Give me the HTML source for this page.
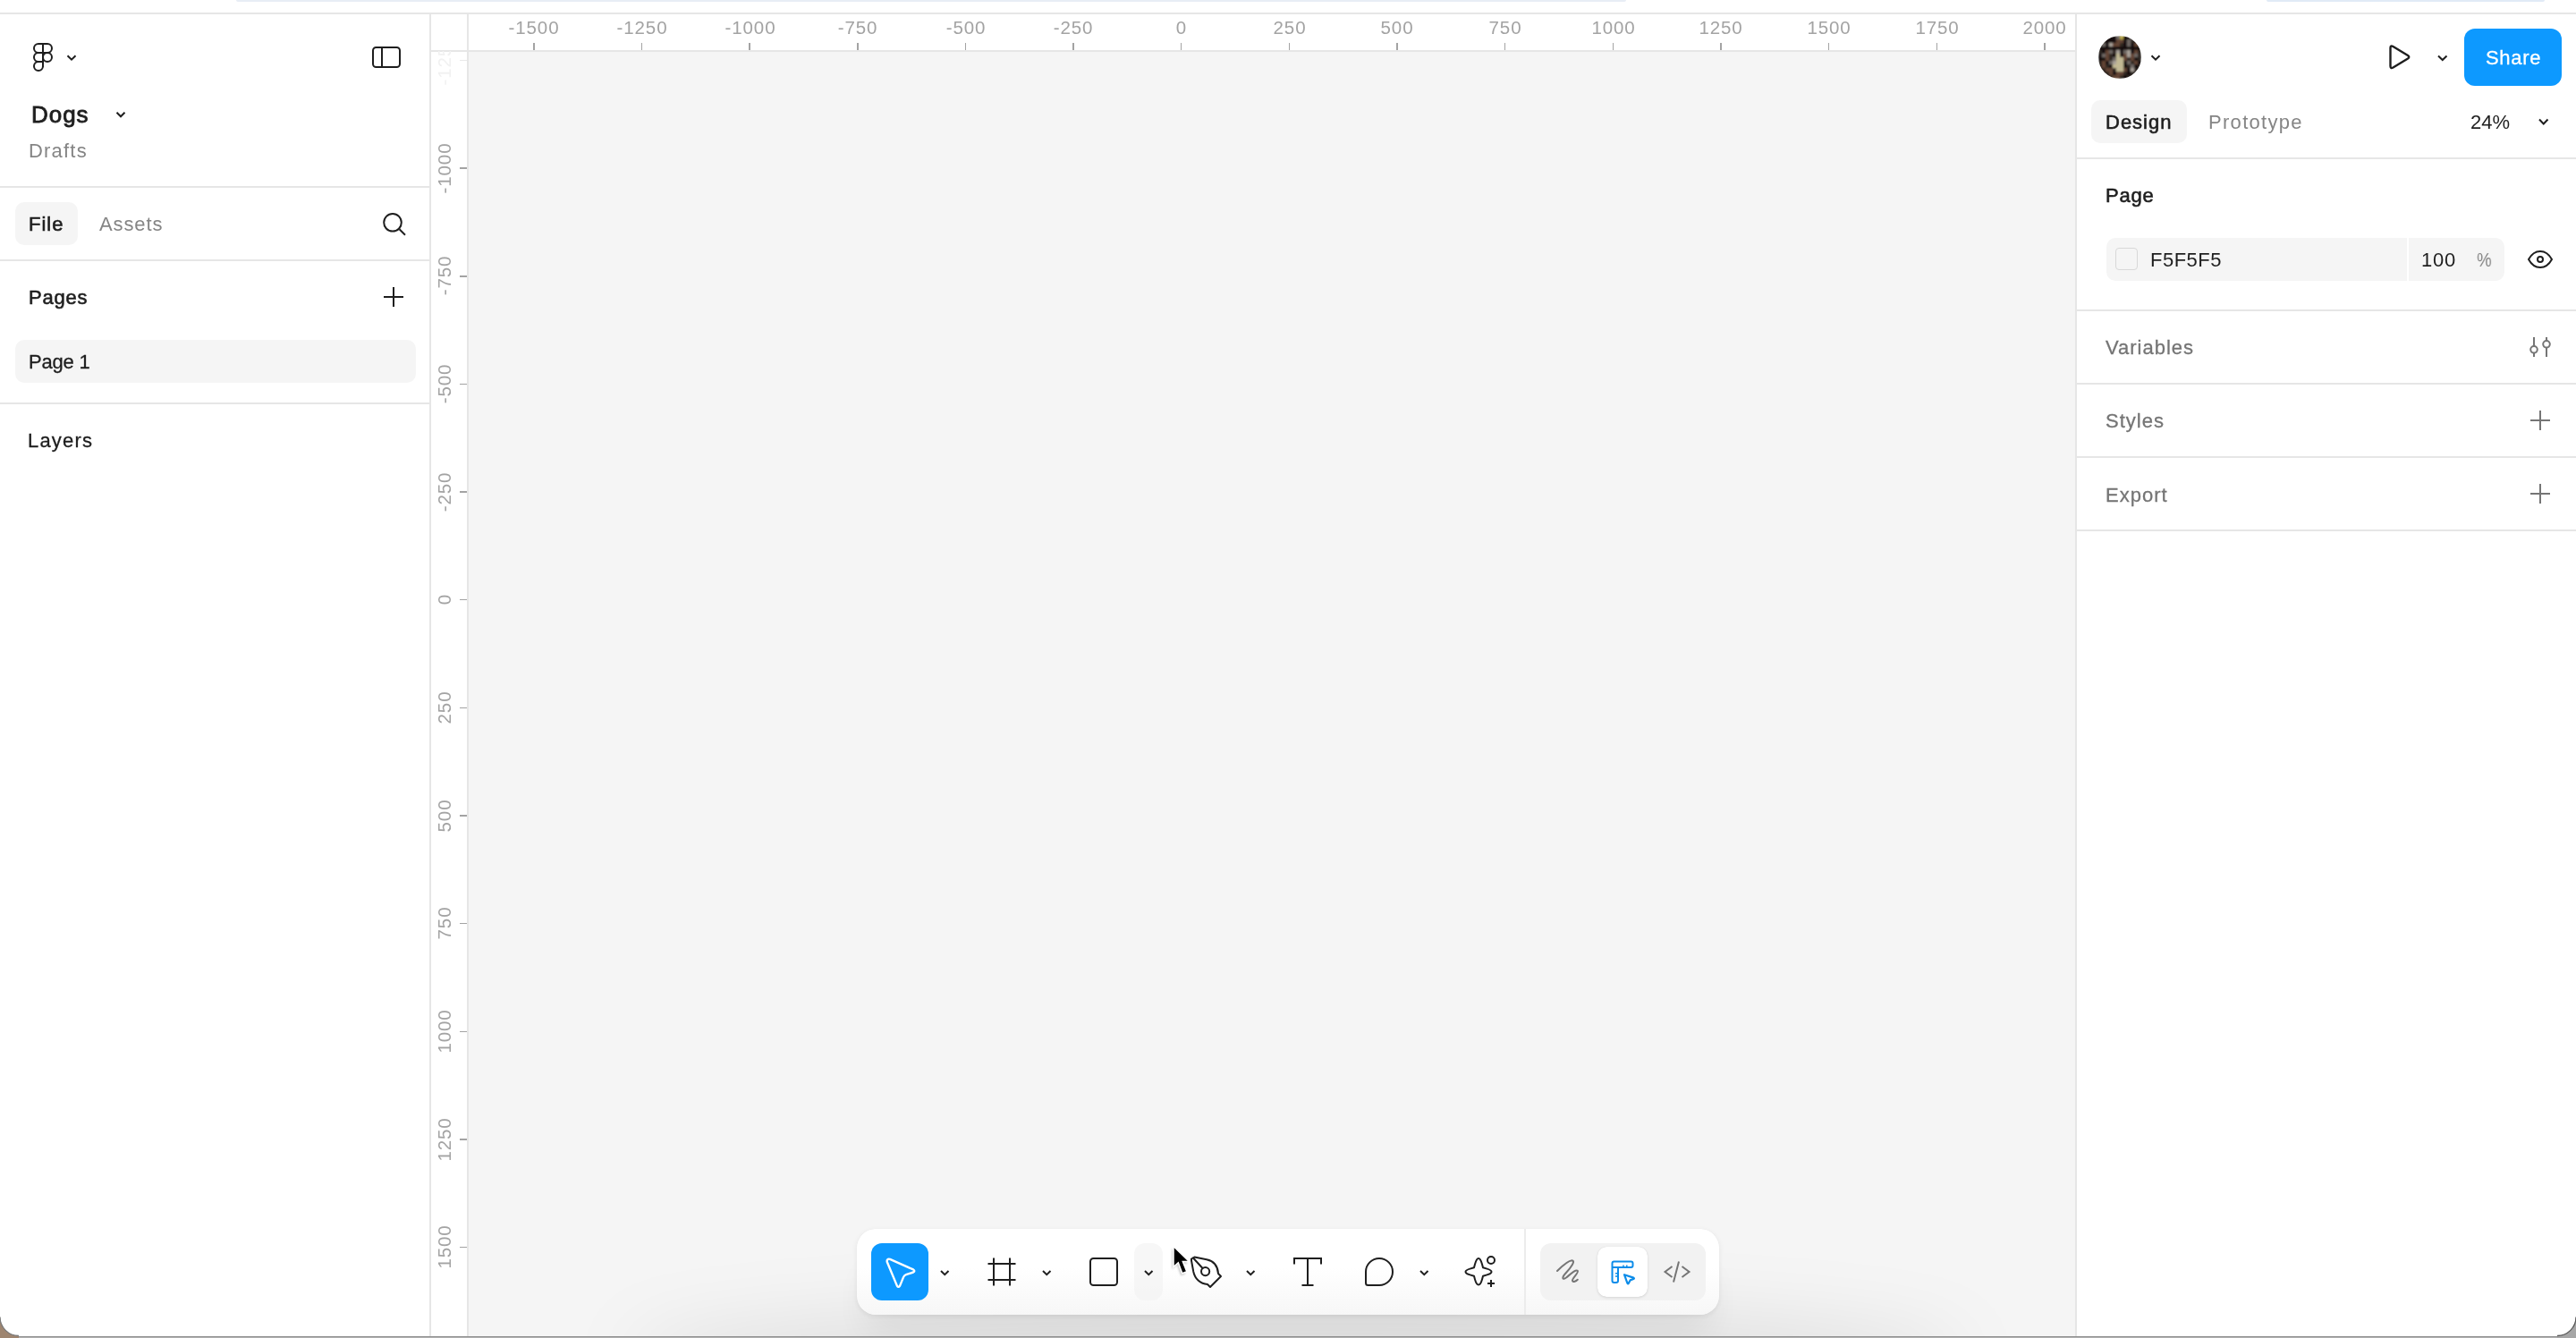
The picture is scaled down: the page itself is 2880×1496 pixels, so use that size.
<!DOCTYPE html>
<html><head><meta charset="utf-8">
<style>
html,body{margin:0;padding:0;}
body{width:2880px;height:1496px;position:relative;overflow:hidden;background:#fff;font-family:"Liberation Sans",sans-serif;color:#1e1e1e;}
.a{position:absolute;}
.t{position:absolute;white-space:nowrap;line-height:1;will-change:transform;-webkit-font-smoothing:antialiased;}
.hl{position:absolute;height:2px;background:#e6e6e6;}
.vl{position:absolute;width:2px;background:#e6e6e6;}
svg{position:absolute;overflow:visible;}
</style></head><body>
<div class="a" style="left:264px;top:0;width:1554px;height:2px;background:#e8edf5;border-radius:0 0 4px 4px"></div>
<div class="a" style="left:2534px;top:0;width:311px;height:2px;background:#e1eaf6;border-radius:0 0 4px 4px"></div>
<div class="hl" style="left:0;top:14px;width:2880px;"></div>
<div class="a" style="left:523px;top:57px;width:1797px;height:1439px;background:#f5f5f5"></div>
<div class="vl" style="left:480px;top:15px;height:1481px;"></div>
<div class="hl" style="left:0;top:208px;width:480px;"></div>
<div class="hl" style="left:0;top:290px;width:480px;"></div>
<div class="hl" style="left:0;top:450px;width:480px;"></div>
<div class="vl" style="left:522px;top:15px;height:1481px;"></div>
<div class="hl" style="left:481px;top:56px;width:1840px;"></div>
<div class="vl" style="left:2320px;top:15px;height:1481px;"></div>
<div class="hl" style="left:2321px;top:176px;width:559px;"></div>
<div class="hl" style="left:2321px;top:346px;width:559px;"></div>
<div class="hl" style="left:2321px;top:428px;width:559px;"></div>
<div class="hl" style="left:2321px;top:510px;width:559px;"></div>
<div class="hl" style="left:2321px;top:592px;width:559px;"></div>
<div class="t" style="left:35.3px;top:114.5px;font-size:26px;font-weight:400;color:#1e1e1e;letter-spacing:0.95px;-webkit-text-stroke:0.85px #1e1e1e;">Dogs</div>
<div class="t" style="left:32.0px;top:158.1px;font-size:22px;font-weight:400;color:#858585;letter-spacing:1.2px;">Drafts</div>
<div class="a" style="left:17px;top:226px;width:70px;height:48px;background:#f5f5f5;border-radius:10px"></div>
<div class="t" style="left:32.0px;top:240.1px;font-size:22px;font-weight:400;color:#1e1e1e;letter-spacing:1.0px;-webkit-text-stroke:0.6px #1e1e1e;">File</div>
<div class="t" style="left:111.0px;top:240.1px;font-size:22px;font-weight:400;color:#858585;letter-spacing:0.9px;">Assets</div>
<div class="t" style="left:31.5px;top:322.1px;font-size:22px;font-weight:400;color:#1e1e1e;letter-spacing:0.8px;-webkit-text-stroke:0.6px #1e1e1e;">Pages</div>
<div class="a" style="left:17px;top:380px;width:448px;height:48px;background:#f5f5f5;border-radius:10px"></div>
<div class="t" style="left:32.0px;top:394.1px;font-size:22px;font-weight:400;color:#1e1e1e;letter-spacing:-0.2px;-webkit-text-stroke:0.3px #1e1e1e;">Page 1</div>
<div class="t" style="left:31.0px;top:482.1px;font-size:22px;font-weight:400;color:#1e1e1e;letter-spacing:1.2px;-webkit-text-stroke:0.3px #1e1e1e;">Layers</div>
<div class="a" style="left:2755px;top:32px;width:109px;height:64px;background:#0d99ff;border-radius:12px"></div>
<div class="t" style="left:2778.5px;top:53.6px;font-size:22px;font-weight:400;color:#fff;letter-spacing:0.7px;-webkit-text-stroke:0.3px #fff;">Share</div>
<div class="a" style="left:2338px;top:112px;width:107px;height:48px;background:#f5f5f5;border-radius:10px"></div>
<div class="t" style="left:2354.0px;top:126.1px;font-size:22px;font-weight:400;color:#1e1e1e;letter-spacing:1.0px;-webkit-text-stroke:0.6px #1e1e1e;">Design</div>
<div class="t" style="left:2469.0px;top:126.1px;font-size:22px;font-weight:400;color:#858585;letter-spacing:1.3px;">Prototype</div>
<div class="t" style="left:2762.0px;top:126.1px;font-size:22px;font-weight:400;color:#1e1e1e;letter-spacing:0px;">24%</div>
<div class="t" style="left:2354.0px;top:207.6px;font-size:22px;font-weight:400;color:#1e1e1e;letter-spacing:0.8px;-webkit-text-stroke:0.6px #1e1e1e;">Page</div>
<div class="a" style="left:2355px;top:266px;width:445px;height:48px;background:#f5f5f5;border-radius:10px"></div>
<div class="a" style="left:2691px;top:266px;width:2px;height:48px;background:#fff"></div>
<div class="a" style="left:2365px;top:277px;width:23px;height:23px;background:#f5f5f5;border:1.5px solid #d8d8d8;border-radius:4px"></div>
<div class="t" style="left:2404.0px;top:279.7px;font-size:22px;font-weight:400;color:#1e1e1e;letter-spacing:0.5px;">F5F5F5</div>
<div class="t" style="left:2707.0px;top:279.7px;font-size:22px;font-weight:400;color:#1e1e1e;letter-spacing:0.8px;">100</div>
<div class="t" style="left:2768.5px;top:279.7px;font-size:22px;font-weight:400;color:#858585;letter-spacing:0px;transform:scaleX(0.85);transform-origin:0 0;">%</div>
<div class="t" style="left:2354.0px;top:377.8px;font-size:22px;font-weight:400;color:#757575;letter-spacing:1.0px;-webkit-text-stroke:0.3px #757575;">Variables</div>
<div class="t" style="left:2354.0px;top:460.4px;font-size:22px;font-weight:400;color:#757575;letter-spacing:1.0px;-webkit-text-stroke:0.3px #757575;">Styles</div>
<div class="t" style="left:2354.0px;top:542.5px;font-size:22px;font-weight:400;color:#757575;letter-spacing:1.0px;-webkit-text-stroke:0.3px #757575;">Export</div>
<div class="a" style="left:595.94px;top:48px;width:1.6px;height:8px;background:#a3a3a3"></div>
<div class="t" style="left:537.19px;width:120px;text-align:center;top:21.1px;font-size:20.5px;letter-spacing:0.9px;color:#a3a3a3">-1500</div>
<div class="a" style="left:716.60px;top:48px;width:1.6px;height:8px;background:#a3a3a3"></div>
<div class="t" style="left:657.85px;width:120px;text-align:center;top:21.1px;font-size:20.5px;letter-spacing:0.9px;color:#a3a3a3">-1250</div>
<div class="a" style="left:837.26px;top:48px;width:1.6px;height:8px;background:#a3a3a3"></div>
<div class="t" style="left:778.51px;width:120px;text-align:center;top:21.1px;font-size:20.5px;letter-spacing:0.9px;color:#a3a3a3">-1000</div>
<div class="a" style="left:957.92px;top:48px;width:1.6px;height:8px;background:#a3a3a3"></div>
<div class="t" style="left:899.17px;width:120px;text-align:center;top:21.1px;font-size:20.5px;letter-spacing:0.9px;color:#a3a3a3">-750</div>
<div class="a" style="left:1078.58px;top:48px;width:1.6px;height:8px;background:#a3a3a3"></div>
<div class="t" style="left:1019.83px;width:120px;text-align:center;top:21.1px;font-size:20.5px;letter-spacing:0.9px;color:#a3a3a3">-500</div>
<div class="a" style="left:1199.24px;top:48px;width:1.6px;height:8px;background:#a3a3a3"></div>
<div class="t" style="left:1140.49px;width:120px;text-align:center;top:21.1px;font-size:20.5px;letter-spacing:0.9px;color:#a3a3a3">-250</div>
<div class="a" style="left:1319.90px;top:48px;width:1.6px;height:8px;background:#a3a3a3"></div>
<div class="t" style="left:1261.15px;width:120px;text-align:center;top:21.1px;font-size:20.5px;letter-spacing:0.9px;color:#a3a3a3">0</div>
<div class="a" style="left:1440.56px;top:48px;width:1.6px;height:8px;background:#a3a3a3"></div>
<div class="t" style="left:1381.81px;width:120px;text-align:center;top:21.1px;font-size:20.5px;letter-spacing:0.9px;color:#a3a3a3">250</div>
<div class="a" style="left:1561.22px;top:48px;width:1.6px;height:8px;background:#a3a3a3"></div>
<div class="t" style="left:1502.47px;width:120px;text-align:center;top:21.1px;font-size:20.5px;letter-spacing:0.9px;color:#a3a3a3">500</div>
<div class="a" style="left:1681.88px;top:48px;width:1.6px;height:8px;background:#a3a3a3"></div>
<div class="t" style="left:1623.13px;width:120px;text-align:center;top:21.1px;font-size:20.5px;letter-spacing:0.9px;color:#a3a3a3">750</div>
<div class="a" style="left:1802.54px;top:48px;width:1.6px;height:8px;background:#a3a3a3"></div>
<div class="t" style="left:1743.79px;width:120px;text-align:center;top:21.1px;font-size:20.5px;letter-spacing:0.9px;color:#a3a3a3">1000</div>
<div class="a" style="left:1923.20px;top:48px;width:1.6px;height:8px;background:#a3a3a3"></div>
<div class="t" style="left:1864.45px;width:120px;text-align:center;top:21.1px;font-size:20.5px;letter-spacing:0.9px;color:#a3a3a3">1250</div>
<div class="a" style="left:2043.86px;top:48px;width:1.6px;height:8px;background:#a3a3a3"></div>
<div class="t" style="left:1985.11px;width:120px;text-align:center;top:21.1px;font-size:20.5px;letter-spacing:0.9px;color:#a3a3a3">1500</div>
<div class="a" style="left:2164.52px;top:48px;width:1.6px;height:8px;background:#a3a3a3"></div>
<div class="t" style="left:2105.77px;width:120px;text-align:center;top:21.1px;font-size:20.5px;letter-spacing:0.9px;color:#a3a3a3">1750</div>
<div class="a" style="left:2285.18px;top:48px;width:1.6px;height:8px;background:#a3a3a3"></div>
<div class="t" style="left:2226.43px;width:120px;text-align:center;top:21.1px;font-size:20.5px;letter-spacing:0.9px;color:#a3a3a3">2000</div>
<div class="a" style="left:481px;top:57px;width:41px;height:40px;overflow:hidden"><div class="a" style="left:33px;top:9.60px;width:8px;height:1.6px;background:#e9e9e9"></div><div class="t" style="left:-44.30px;width:120px;text-align:center;top:-0.1px;height:20px;line-height:20px;font-size:20.5px;letter-spacing:0.9px;color:#f1f1f1;transform:rotate(-90deg);transform-origin:60px 10px">-1250</div></div>
<div class="a" style="left:514px;top:187.26px;width:8px;height:1.6px;background:#a3a3a3"></div>
<div class="t" style="left:436.70px;width:120px;text-align:center;top:177.6px;height:20px;line-height:20px;font-size:20.5px;letter-spacing:0.9px;color:#a3a3a3;transform:rotate(-90deg);transform-origin:60px 10px">-1000</div>
<div class="a" style="left:514px;top:307.92px;width:8px;height:1.6px;background:#a3a3a3"></div>
<div class="t" style="left:436.70px;width:120px;text-align:center;top:298.3px;height:20px;line-height:20px;font-size:20.5px;letter-spacing:0.9px;color:#a3a3a3;transform:rotate(-90deg);transform-origin:60px 10px">-750</div>
<div class="a" style="left:514px;top:428.58px;width:8px;height:1.6px;background:#a3a3a3"></div>
<div class="t" style="left:436.70px;width:120px;text-align:center;top:418.9px;height:20px;line-height:20px;font-size:20.5px;letter-spacing:0.9px;color:#a3a3a3;transform:rotate(-90deg);transform-origin:60px 10px">-500</div>
<div class="a" style="left:514px;top:549.24px;width:8px;height:1.6px;background:#a3a3a3"></div>
<div class="t" style="left:436.70px;width:120px;text-align:center;top:539.6px;height:20px;line-height:20px;font-size:20.5px;letter-spacing:0.9px;color:#a3a3a3;transform:rotate(-90deg);transform-origin:60px 10px">-250</div>
<div class="a" style="left:514px;top:669.90px;width:8px;height:1.6px;background:#a3a3a3"></div>
<div class="t" style="left:436.70px;width:120px;text-align:center;top:660.2px;height:20px;line-height:20px;font-size:20.5px;letter-spacing:0.9px;color:#a3a3a3;transform:rotate(-90deg);transform-origin:60px 10px">0</div>
<div class="a" style="left:514px;top:790.56px;width:8px;height:1.6px;background:#a3a3a3"></div>
<div class="t" style="left:436.70px;width:120px;text-align:center;top:780.9px;height:20px;line-height:20px;font-size:20.5px;letter-spacing:0.9px;color:#a3a3a3;transform:rotate(-90deg);transform-origin:60px 10px">250</div>
<div class="a" style="left:514px;top:911.22px;width:8px;height:1.6px;background:#a3a3a3"></div>
<div class="t" style="left:436.70px;width:120px;text-align:center;top:901.6px;height:20px;line-height:20px;font-size:20.5px;letter-spacing:0.9px;color:#a3a3a3;transform:rotate(-90deg);transform-origin:60px 10px">500</div>
<div class="a" style="left:514px;top:1031.88px;width:8px;height:1.6px;background:#a3a3a3"></div>
<div class="t" style="left:436.70px;width:120px;text-align:center;top:1022.2px;height:20px;line-height:20px;font-size:20.5px;letter-spacing:0.9px;color:#a3a3a3;transform:rotate(-90deg);transform-origin:60px 10px">750</div>
<div class="a" style="left:514px;top:1152.54px;width:8px;height:1.6px;background:#a3a3a3"></div>
<div class="t" style="left:436.70px;width:120px;text-align:center;top:1142.9px;height:20px;line-height:20px;font-size:20.5px;letter-spacing:0.9px;color:#a3a3a3;transform:rotate(-90deg);transform-origin:60px 10px">1000</div>
<div class="a" style="left:514px;top:1273.20px;width:8px;height:1.6px;background:#a3a3a3"></div>
<div class="t" style="left:436.70px;width:120px;text-align:center;top:1263.5px;height:20px;line-height:20px;font-size:20.5px;letter-spacing:0.9px;color:#a3a3a3;transform:rotate(-90deg);transform-origin:60px 10px">1250</div>
<div class="a" style="left:514px;top:1393.86px;width:8px;height:1.6px;background:#a3a3a3"></div>
<div class="t" style="left:436.70px;width:120px;text-align:center;top:1384.2px;height:20px;line-height:20px;font-size:20.5px;letter-spacing:0.9px;color:#a3a3a3;transform:rotate(-90deg);transform-origin:60px 10px">1500</div>
<svg width="2880" height="1496" style="left:0;top:0;" viewBox="0 0 2880 1496" fill="none" stroke-linecap="round" stroke-linejoin="round"><g stroke="#1e1e1e" stroke-width="2"><path d="M43,49 H53 A5,5 0 0 1 53,59 H43 A5,5 0 0 1 43,49 Z"/><path d="M48,59 H43 A5,5 0 0 0 43,69 H48"/><circle cx="53" cy="64" r="5"/><path d="M48,69 H43 A5,5 0 1 0 48,74 Z"/><path d="M48,49 V74"/></g><path d="M75.5,62.2 L80.0,66.7 L84.5,62.2" stroke="#1e1e1e" stroke-width="2" stroke-linecap="butt" stroke-linejoin="miter"/><path d="M130.5,125.8 L135.0,130.3 L139.5,125.8" stroke="#1e1e1e" stroke-width="2" stroke-linecap="butt" stroke-linejoin="miter"/><rect x="417" y="53" width="30" height="22" rx="3.5" stroke="#1e1e1e" stroke-width="2"/><path d="M427,53 V75" stroke="#1e1e1e" stroke-width="2"/><circle cx="439" cy="248.8" r="9.8" stroke="#1e1e1e" stroke-width="2"/><path d="M446.5,256.3 L453,262.8" stroke="#1e1e1e" stroke-width="2" stroke-linecap="butt"/><path d="M429,332 H451 M440,321 V343" stroke="#1e1e1e" stroke-width="2" stroke-linecap="butt"/><path d="M2405.5,62.2 L2410.0,66.7 L2414.5,62.2" stroke="#1e1e1e" stroke-width="2" stroke-linecap="butt" stroke-linejoin="miter"/><path d="M2726,62.5 L2730.75,67.0 L2735.5,62.5" stroke="#1e1e1e" stroke-width="2" stroke-linecap="butt" stroke-linejoin="miter"/><path d="M2839,133.5 L2843.75,138.5 L2848.5,133.5" stroke="#1e1e1e" stroke-width="2" stroke-linecap="butt" stroke-linejoin="miter"/><path d="M2672.5,53.5 Q2672.5,50.5 2675.5,52 L2692,62 Q2694.5,63.8 2692,65.5 L2675.5,75.5 Q2672.5,77 2672.5,74 Z" stroke="#1e1e1e" stroke-width="2.4"/><path d="M2827,290 C2830,284.5 2834.5,281 2840,281 C2845.5,281 2850,284.5 2853,290 C2850,295.5 2845.5,299 2840,299 C2834.5,299 2830,295.5 2827,290 Z" stroke="#1e1e1e" stroke-width="2"/><circle cx="2840" cy="290" r="3" stroke="#1e1e1e" stroke-width="2"/><g stroke="#757575" stroke-width="2" stroke-linecap="butt"><path d="M2833,377 V387 M2833,394.6 V399"/><circle cx="2833" cy="390.8" r="3.8"/><path d="M2847,377 V381 M2847,388.6 V399"/><circle cx="2847" cy="384.8" r="3.8"/></g><path d="M2829,470 H2851 M2840,459 V481 M2829,552 H2851 M2840,541 V563" stroke="#757575" stroke-width="2" stroke-linecap="butt"/></svg>
<svg width="2880" height="1496" style="left:0;top:0" viewBox="0 0 2880 1496"><defs><clipPath id="avc"><circle cx="2370" cy="64" r="24"/></clipPath><filter id="avb" x="-10%" y="-10%" width="120%" height="120%"><feGaussianBlur stdDeviation="0.8"/></filter></defs><g clip-path="url(#avc)"><g filter="url(#avb)"><rect x="2346" y="40" width="4.2" height="4.2" fill="#141110"/><rect x="2350" y="40" width="4.2" height="4.2" fill="#141110"/><rect x="2354" y="40" width="4.2" height="4.2" fill="#141110"/><rect x="2358" y="40" width="4.2" height="4.2" fill="#141110"/><rect x="2362" y="40" width="4.2" height="4.2" fill="#141110"/><rect x="2366" y="40" width="4.2" height="4.2" fill="#6e6864"/><rect x="2370" y="40" width="4.2" height="4.2" fill="#b8a848"/><rect x="2374" y="40" width="4.2" height="4.2" fill="#141110"/><rect x="2378" y="40" width="4.2" height="4.2" fill="#141110"/><rect x="2382" y="40" width="4.2" height="4.2" fill="#6e6864"/><rect x="2386" y="40" width="4.2" height="4.2" fill="#141110"/><rect x="2390" y="40" width="4.2" height="4.2" fill="#141110"/><rect x="2346" y="44" width="4.2" height="4.2" fill="#141110"/><rect x="2350" y="44" width="4.2" height="4.2" fill="#2f2724"/><rect x="2354" y="44" width="4.2" height="4.2" fill="#141110"/><rect x="2358" y="44" width="4.2" height="4.2" fill="#141110"/><rect x="2362" y="44" width="4.2" height="4.2" fill="#141110"/><rect x="2366" y="44" width="4.2" height="4.2" fill="#634536"/><rect x="2370" y="44" width="4.2" height="4.2" fill="#634536"/><rect x="2374" y="44" width="4.2" height="4.2" fill="#141110"/><rect x="2378" y="44" width="4.2" height="4.2" fill="#6e6864"/><rect x="2382" y="44" width="4.2" height="4.2" fill="#2f2724"/><rect x="2386" y="44" width="4.2" height="4.2" fill="#141110"/><rect x="2390" y="44" width="4.2" height="4.2" fill="#141110"/><rect x="2346" y="48" width="4.2" height="4.2" fill="#2f2724"/><rect x="2350" y="48" width="4.2" height="4.2" fill="#6e6864"/><rect x="2354" y="48" width="4.2" height="4.2" fill="#141110"/><rect x="2358" y="48" width="4.2" height="4.2" fill="#a8a098"/><rect x="2362" y="48" width="4.2" height="4.2" fill="#634536"/><rect x="2366" y="48" width="4.2" height="4.2" fill="#634536"/><rect x="2370" y="48" width="4.2" height="4.2" fill="#2f2724"/><rect x="2374" y="48" width="4.2" height="4.2" fill="#141110"/><rect x="2378" y="48" width="4.2" height="4.2" fill="#6e6864"/><rect x="2382" y="48" width="4.2" height="4.2" fill="#141110"/><rect x="2386" y="48" width="4.2" height="4.2" fill="#634536"/><rect x="2390" y="48" width="4.2" height="4.2" fill="#2f2724"/><rect x="2346" y="52" width="4.2" height="4.2" fill="#141110"/><rect x="2350" y="52" width="4.2" height="4.2" fill="#141110"/><rect x="2354" y="52" width="4.2" height="4.2" fill="#141110"/><rect x="2358" y="52" width="4.2" height="4.2" fill="#141110"/><rect x="2362" y="52" width="4.2" height="4.2" fill="#141110"/><rect x="2366" y="52" width="4.2" height="4.2" fill="#141110"/><rect x="2370" y="52" width="4.2" height="4.2" fill="#141110"/><rect x="2374" y="52" width="4.2" height="4.2" fill="#141110"/><rect x="2378" y="52" width="4.2" height="4.2" fill="#141110"/><rect x="2382" y="52" width="4.2" height="4.2" fill="#141110"/><rect x="2386" y="52" width="4.2" height="4.2" fill="#141110"/><rect x="2390" y="52" width="4.2" height="4.2" fill="#141110"/><rect x="2346" y="56" width="4.2" height="4.2" fill="#2f2724"/><rect x="2350" y="56" width="4.2" height="4.2" fill="#141110"/><rect x="2354" y="56" width="4.2" height="4.2" fill="#634536"/><rect x="2358" y="56" width="4.2" height="4.2" fill="#6e6864"/><rect x="2362" y="56" width="4.2" height="4.2" fill="#2f2724"/><rect x="2366" y="56" width="4.2" height="4.2" fill="#a8a098"/><rect x="2370" y="56" width="4.2" height="4.2" fill="#141110"/><rect x="2374" y="56" width="4.2" height="4.2" fill="#6e6864"/><rect x="2378" y="56" width="4.2" height="4.2" fill="#a8a098"/><rect x="2382" y="56" width="4.2" height="4.2" fill="#141110"/><rect x="2386" y="56" width="4.2" height="4.2" fill="#634536"/><rect x="2390" y="56" width="4.2" height="4.2" fill="#2f2724"/><rect x="2346" y="60" width="4.2" height="4.2" fill="#141110"/><rect x="2350" y="60" width="4.2" height="4.2" fill="#6e6864"/><rect x="2354" y="60" width="4.2" height="4.2" fill="#634536"/><rect x="2358" y="60" width="4.2" height="4.2" fill="#2f2724"/><rect x="2362" y="60" width="4.2" height="4.2" fill="#141110"/><rect x="2366" y="60" width="4.2" height="4.2" fill="#c2b994"/><rect x="2370" y="60" width="4.2" height="4.2" fill="#141110"/><rect x="2374" y="60" width="4.2" height="4.2" fill="#634536"/><rect x="2378" y="60" width="4.2" height="4.2" fill="#a8a098"/><rect x="2382" y="60" width="4.2" height="4.2" fill="#634536"/><rect x="2386" y="60" width="4.2" height="4.2" fill="#6e6864"/><rect x="2390" y="60" width="4.2" height="4.2" fill="#2f2724"/><rect x="2346" y="64" width="4.2" height="4.2" fill="#141110"/><rect x="2350" y="64" width="4.2" height="4.2" fill="#141110"/><rect x="2354" y="64" width="4.2" height="4.2" fill="#634536"/><rect x="2358" y="64" width="4.2" height="4.2" fill="#2f2724"/><rect x="2362" y="64" width="4.2" height="4.2" fill="#6e6864"/><rect x="2366" y="64" width="4.2" height="4.2" fill="#c2b994"/><rect x="2370" y="64" width="4.2" height="4.2" fill="#c2b994"/><rect x="2374" y="64" width="4.2" height="4.2" fill="#634536"/><rect x="2378" y="64" width="4.2" height="4.2" fill="#2f2724"/><rect x="2382" y="64" width="4.2" height="4.2" fill="#634536"/><rect x="2386" y="64" width="4.2" height="4.2" fill="#141110"/><rect x="2390" y="64" width="4.2" height="4.2" fill="#2f2724"/><rect x="2346" y="68" width="4.2" height="4.2" fill="#2f2724"/><rect x="2350" y="68" width="4.2" height="4.2" fill="#634536"/><rect x="2354" y="68" width="4.2" height="4.2" fill="#141110"/><rect x="2358" y="68" width="4.2" height="4.2" fill="#6e6864"/><rect x="2362" y="68" width="4.2" height="4.2" fill="#a8a098"/><rect x="2366" y="68" width="4.2" height="4.2" fill="#c2b994"/><rect x="2370" y="68" width="4.2" height="4.2" fill="#c2b994"/><rect x="2374" y="68" width="4.2" height="4.2" fill="#141110"/><rect x="2378" y="68" width="4.2" height="4.2" fill="#6e6864"/><rect x="2382" y="68" width="4.2" height="4.2" fill="#2f2724"/><rect x="2386" y="68" width="4.2" height="4.2" fill="#634536"/><rect x="2390" y="68" width="4.2" height="4.2" fill="#141110"/><rect x="2346" y="72" width="4.2" height="4.2" fill="#2f2724"/><rect x="2350" y="72" width="4.2" height="4.2" fill="#634536"/><rect x="2354" y="72" width="4.2" height="4.2" fill="#2f2724"/><rect x="2358" y="72" width="4.2" height="4.2" fill="#141110"/><rect x="2362" y="72" width="4.2" height="4.2" fill="#c2b994"/><rect x="2366" y="72" width="4.2" height="4.2" fill="#c2b994"/><rect x="2370" y="72" width="4.2" height="4.2" fill="#c2b994"/><rect x="2374" y="72" width="4.2" height="4.2" fill="#141110"/><rect x="2378" y="72" width="4.2" height="4.2" fill="#2f2724"/><rect x="2382" y="72" width="4.2" height="4.2" fill="#6e6864"/><rect x="2386" y="72" width="4.2" height="4.2" fill="#141110"/><rect x="2390" y="72" width="4.2" height="4.2" fill="#2f2724"/><rect x="2346" y="76" width="4.2" height="4.2" fill="#141110"/><rect x="2350" y="76" width="4.2" height="4.2" fill="#2f2724"/><rect x="2354" y="76" width="4.2" height="4.2" fill="#634536"/><rect x="2358" y="76" width="4.2" height="4.2" fill="#634536"/><rect x="2362" y="76" width="4.2" height="4.2" fill="#2f2724"/><rect x="2366" y="76" width="4.2" height="4.2" fill="#c2b994"/><rect x="2370" y="76" width="4.2" height="4.2" fill="#c2b994"/><rect x="2374" y="76" width="4.2" height="4.2" fill="#634536"/><rect x="2378" y="76" width="4.2" height="4.2" fill="#141110"/><rect x="2382" y="76" width="4.2" height="4.2" fill="#a8a098"/><rect x="2386" y="76" width="4.2" height="4.2" fill="#2f2724"/><rect x="2390" y="76" width="4.2" height="4.2" fill="#141110"/><rect x="2346" y="80" width="4.2" height="4.2" fill="#2f2724"/><rect x="2350" y="80" width="4.2" height="4.2" fill="#141110"/><rect x="2354" y="80" width="4.2" height="4.2" fill="#2f2724"/><rect x="2358" y="80" width="4.2" height="4.2" fill="#634536"/><rect x="2362" y="80" width="4.2" height="4.2" fill="#141110"/><rect x="2366" y="80" width="4.2" height="4.2" fill="#634536"/><rect x="2370" y="80" width="4.2" height="4.2" fill="#634536"/><rect x="2374" y="80" width="4.2" height="4.2" fill="#2f2724"/><rect x="2378" y="80" width="4.2" height="4.2" fill="#141110"/><rect x="2382" y="80" width="4.2" height="4.2" fill="#2f2724"/><rect x="2386" y="80" width="4.2" height="4.2" fill="#141110"/><rect x="2390" y="80" width="4.2" height="4.2" fill="#2f2724"/><rect x="2346" y="84" width="4.2" height="4.2" fill="#141110"/><rect x="2350" y="84" width="4.2" height="4.2" fill="#2f2724"/><rect x="2354" y="84" width="4.2" height="4.2" fill="#141110"/><rect x="2358" y="84" width="4.2" height="4.2" fill="#2f2724"/><rect x="2362" y="84" width="4.2" height="4.2" fill="#634536"/><rect x="2366" y="84" width="4.2" height="4.2" fill="#634536"/><rect x="2370" y="84" width="4.2" height="4.2" fill="#2f2724"/><rect x="2374" y="84" width="4.2" height="4.2" fill="#141110"/><rect x="2378" y="84" width="4.2" height="4.2" fill="#2f2724"/><rect x="2382" y="84" width="4.2" height="4.2" fill="#141110"/><rect x="2386" y="84" width="4.2" height="4.2" fill="#2f2724"/><rect x="2390" y="84" width="4.2" height="4.2" fill="#141110"/></g></g></svg>
<div class="a" style="left:700px;top:1462px;width:1500px;height:110px;border-radius:50%;background:rgba(0,0,0,.085);filter:blur(40px)"></div>
<div class="a" style="left:958px;top:1374px;width:964px;height:96px;border-radius:21px;background:linear-gradient(#fff 45%,#f7f7f7 100%);box-shadow:0 0 0.5px rgba(0,0,0,.2),0 2px 6px rgba(0,0,0,.08),0 34px 46px -10px rgba(0,0,0,.07)"></div>
<div class="a" style="left:974px;top:1390px;width:64px;height:64px;border-radius:12px;background:#0d99ff"></div>
<div class="a" style="left:1268px;top:1390px;width:32px;height:64px;border-radius:12px;background:#f2f2f2;opacity:.6"></div>
<div class="a" style="left:1704px;top:1374px;width:2px;height:96px;background:#ececec"></div>
<div class="a" style="left:1722px;top:1390px;width:185px;height:64px;border-radius:12px;background:#f2f2f2"></div>
<div class="a" style="left:1786px;top:1394px;width:56px;height:56px;border-radius:10px;background:#fff;box-shadow:0 1px 3px rgba(0,0,0,.12),0 0 0.5px rgba(0,0,0,.15)"></div>
<svg width="2880" height="1496" style="left:0;top:0;" viewBox="0 0 2880 1496" fill="none" stroke-linecap="round" stroke-linejoin="round"><path d="M995,1407.9 L1021,1419.4 Q1023.6,1421 1021,1422.5 L1013,1425.2 Q1010.9,1426 1010,1428.1 L1006.1,1437.6 Q1004.4,1440.2 1002.9,1437.6 L991.8,1411 Q991,1407.1 995,1407.9 Z" stroke="#fff" stroke-width="2.4"/><path d="M1052,1421 L1056.25,1425.2 L1060.5,1421" stroke="#1e1e1e" stroke-width="2" stroke-linecap="butt" stroke-linejoin="miter"/><path d="M1111,1406.5 V1437.5 M1129,1406.5 V1437.5 M1104.5,1413 H1135.5 M1104.5,1431 H1135.5" stroke="#1e1e1e" stroke-width="2" stroke-linecap="butt"/><path d="M1166,1421 L1170.25,1425.2 L1174.5,1421" stroke="#1e1e1e" stroke-width="2" stroke-linecap="butt" stroke-linejoin="miter"/><rect x="1219" y="1407" width="30" height="30" rx="3.5" stroke="#1e1e1e" stroke-width="2"/><path d="M1280,1421 L1284.25,1425.2 L1288.5,1421" stroke="#1e1e1e" stroke-width="2" stroke-linecap="butt" stroke-linejoin="miter"/><path d="M1332,1407.5 L1335.5,1405.5 L1349,1408.3 C1357,1410 1361.5,1416 1362,1424 L1365,1427 L1353,1439 L1350,1436 C1342,1435.5 1336,1430 1334.3,1422 L1332,1409.5 Z" stroke="#1e1e1e" stroke-width="2"/><path d="M1334,1406.5 L1344.5,1418" stroke="#1e1e1e" stroke-width="2"/><circle cx="1347.6" cy="1421.6" r="4.6" stroke="#1e1e1e" stroke-width="2"/><path d="M1394,1421 L1398.25,1425.2 L1402.5,1421" stroke="#1e1e1e" stroke-width="2" stroke-linecap="butt" stroke-linejoin="miter"/><path d="M1447,1413.5 V1407 H1477 V1413.5 M1462,1407 V1437 M1455.5,1437 H1468.5" stroke="#1e1e1e" stroke-width="2" stroke-linecap="butt" stroke-linejoin="miter"/><path d="M1527,1422 A15,15 0 1 1 1542,1437 L1529.5,1437 Q1527,1437 1527,1434.5 Z" stroke="#1e1e1e" stroke-width="2"/><path d="M1588,1421 L1592.25,1425.2 L1596.5,1421" stroke="#1e1e1e" stroke-width="2" stroke-linecap="butt" stroke-linejoin="miter"/><path d="M1653,1407 C1655,1407 1656,1410 1657,1413.5 L1658,1417.3 L1662.5,1418.6 C1666,1419.6 1667.5,1420.6 1667.5,1422 C1667.5,1423.4 1666,1424.4 1662.5,1425.4 L1658,1426.7 L1657,1430.5 C1656,1434 1655,1436.5 1653,1436.5 C1651,1436.5 1650,1434 1649,1430.5 L1648,1426.7 L1643.5,1425.4 C1640,1424.4 1638.5,1423.4 1638.5,1422 C1638.5,1420.6 1640,1419.6 1643.5,1418.6 L1648,1417.3 L1649,1413.5 C1650,1410 1651,1407 1653,1407 Z" stroke="#1e1e1e" stroke-width="2"/><circle cx="1667" cy="1409" r="4" stroke="#1e1e1e" stroke-width="2"/><path d="M1663,1435 H1671 M1667,1431 V1439" stroke="#1e1e1e" stroke-width="2" stroke-linecap="butt"/><path d="M1741,1421 C1747,1415 1753,1409.5 1757.5,1409.2 C1762,1409.5 1756,1417.5 1750.5,1423.5 C1745.5,1429 1747,1431.5 1751,1428.5 C1756,1424.5 1761.5,1419 1763.8,1420.8 C1765.5,1423 1757,1429.5 1758,1432 C1759,1434 1762,1432.5 1763.8,1430.8" stroke="#757575" stroke-width="2"/><path d="M1809,1417 H1823.5 Q1825.5,1417 1825.5,1415 V1412.5 Q1825.5,1410.5 1823.5,1410.5 H1804.5 Q1802.5,1410.5 1802.5,1412.5 V1432 Q1802.5,1434 1804.5,1434 H1807 Q1809,1434 1809,1432 Z M1802.5,1417 H1809" stroke="#0c8ce9" stroke-width="2"/><path d="M1815,1414.5 V1417 M1818.8,1414.5 V1417 M1806,1423.7 H1809 M1806,1427 H1809" stroke="#0c8ce9" stroke-width="1.5" stroke-linecap="butt"/><path d="M1816,1425.2 L1826.3,1428.6 Q1827.6,1429.3 1826.3,1430 L1822.6,1431.4 L1820.8,1434.8 Q1820,1436 1819.4,1434.6 Z" stroke="#0c8ce9" stroke-width="2.2"/><path d="M1869.5,1416 L1861.5,1422 L1869.5,1428 M1880.5,1416 L1888.5,1422 L1880.5,1428 M1877,1410.5 L1871,1433.5" stroke="#757575" stroke-width="2" stroke-linecap="butt" stroke-linejoin="miter"/></svg>
<svg width="2880" height="1496" style="left:0;top:0" viewBox="0 0 2880 1496"><defs><filter id="csh" x="-50%" y="-50%" width="200%" height="200%"><feGaussianBlur stdDeviation="1.2"/></filter></defs><path d="M1310.5,1396 L1310.5,1419 L1315.8,1414.3 L1320.3,1426.3 L1325.3,1424.3 L1320.8,1412.9 L1328,1412.9 Z" fill="rgba(0,0,0,.22)" filter="url(#csh)"/><path d="M1312,1393.5 L1312,1416.5 L1317.3,1411.8 L1321.8,1423.8 L1326.8,1421.8 L1322.3,1410.4 L1329.5,1410.4 Z" fill="#000" stroke="#fff" stroke-width="1.5" stroke-linejoin="miter"/></svg>
<div class="a" style="left:0;top:1494px;width:2880px;height:1px;background:#8e8e8e"></div>
<div class="a" style="left:0;top:1495px;width:2880px;height:1px;background:#b2b2b2"></div>
<svg width="2880" height="1496" style="left:0;top:0" viewBox="0 0 2880 1496"><path d="M0,1472.5 A21,21 0 0 0 21,1493.5 L21,1496 L0,1496 Z" fill="#9e8570"/><path d="M0,1472.5 A21,21 0 0 0 21,1493.5" stroke="#7a7a7a" stroke-width="1.3" fill="none"/><path d="M2880,1472.5 A21,21 0 0 1 2859,1493.5 L2859,1496 L2880,1496 Z" fill="#a6a6a6"/><path d="M2880,1472.5 A21,21 0 0 1 2859,1493.5" stroke="#5a5a5a" stroke-width="1.3" fill="none"/></svg>
</body></html>
